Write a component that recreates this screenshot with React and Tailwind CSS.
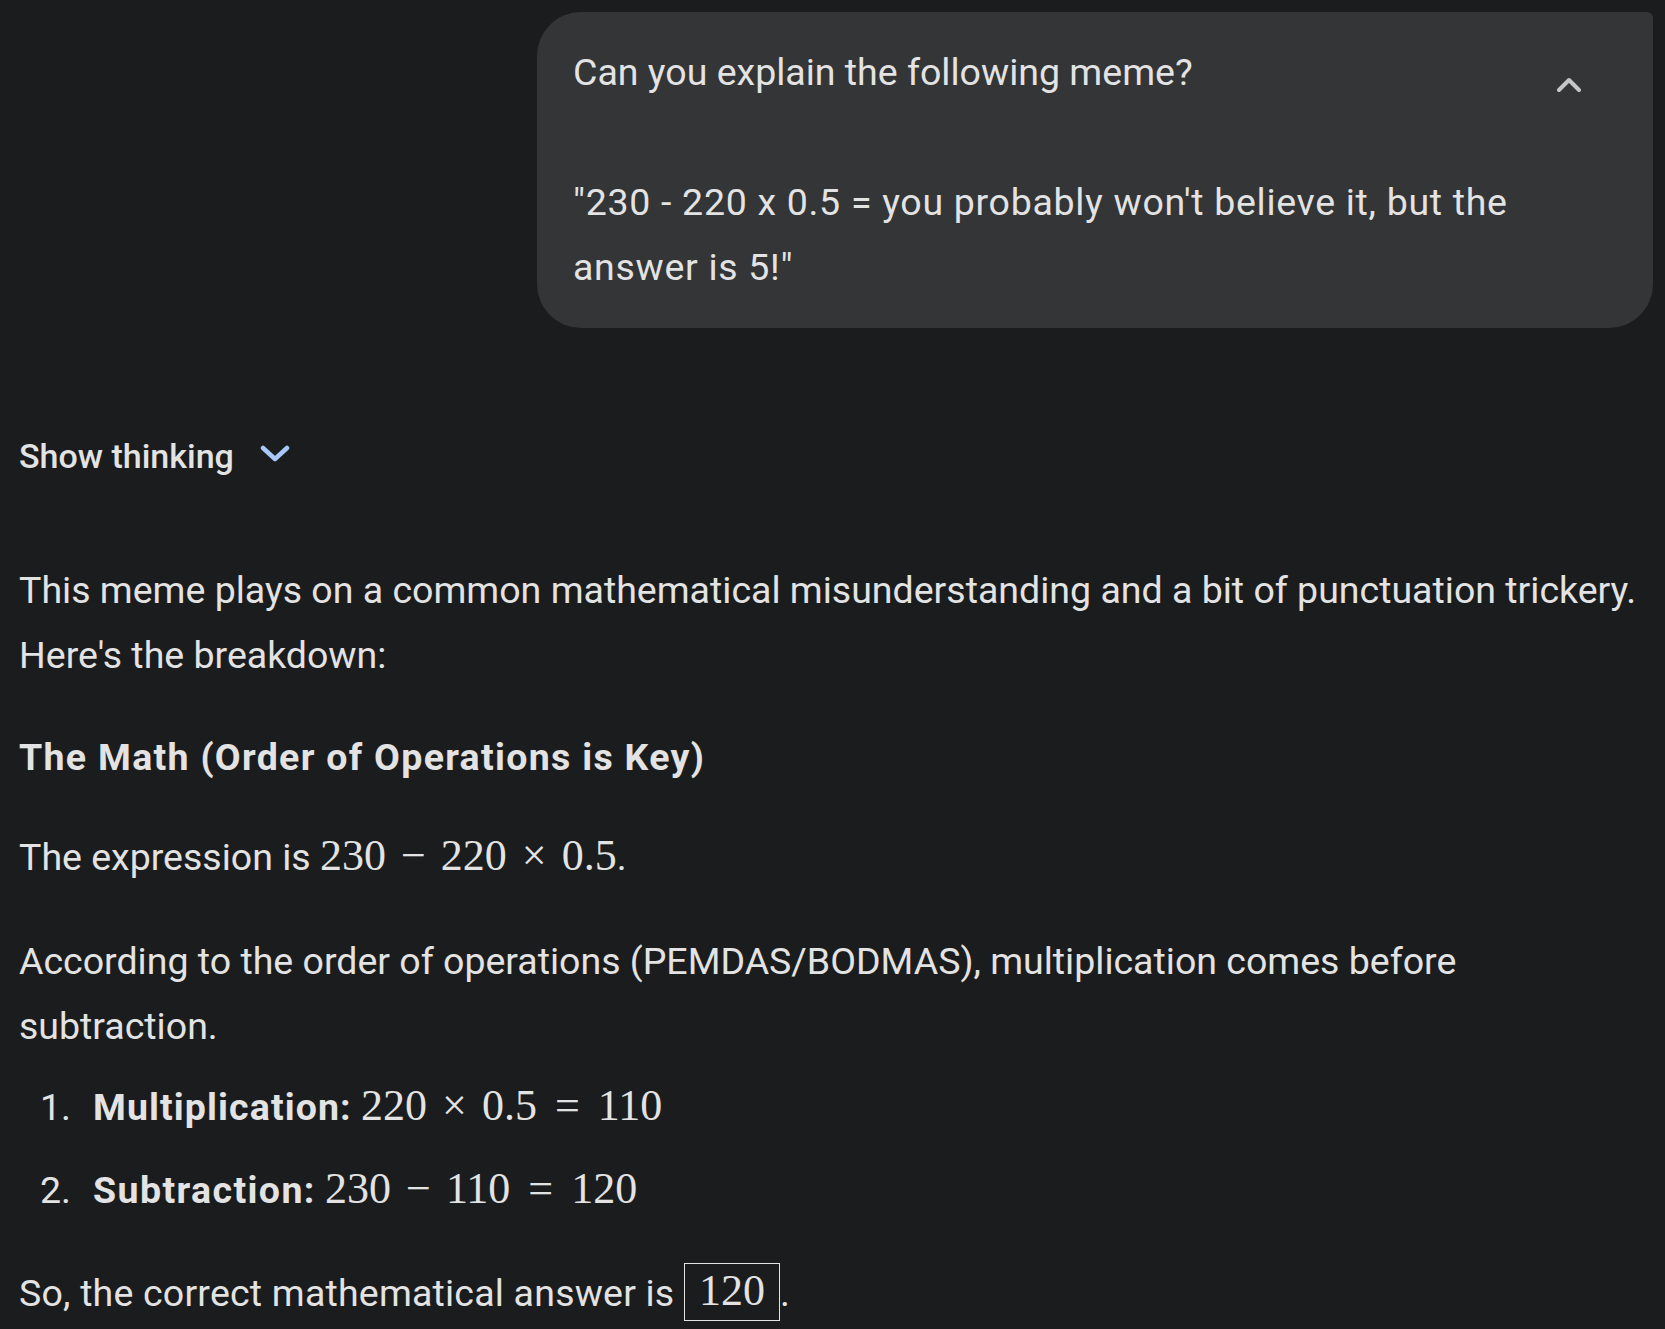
import React from 'react';

// KaTeX-ish inline math: serif digits, spaced operators
const M = ({ children }) => (
    <span className="font-['Liberation_Serif',serif] text-[44px] leading-none whitespace-nowrap">{children}</span>
);
const Op = ({ children }) => <span className="mx-[15px]">{children}</span>;
const Rel = ({ children }) => <span className="mx-[18px]">{children}</span>;

export default function App() {
    return (
        <div className="min-h-screen bg-[#1b1c1d] text-[#e3e3e3] font-['Roboto',sans-serif] text-[37.5px] leading-[65px]">
            {/* user prompt */}
            <div className="flex justify-end pt-[12px] pr-[12px]">
                <div className="flex w-[1116px] rounded-[44px] rounded-tr-[6px] bg-[#333537] py-[28px] pl-[36px] pr-[72px]">
                    <div className="flex-1">
                        <p>Can you explain the following meme?</p>
                        <p>&nbsp;</p>
                        <p className="tracking-[0.7px]">"230 - 220 x 0.5 = you probably won't believe it, but the answer is 5!"</p>
                    </div>
                    <svg width="24" height="16" viewBox="0 0 24 16" className="mt-[37px] shrink-0">
                        <polyline points="2,13 12,3 22,13" fill="none" stroke="#c4c7c5" strokeWidth="4" strokeLinecap="round" strokeLinejoin="round" />
                    </svg>
                </div>
            </div>

            {/* response */}
            <div className="px-[19px]">
                <button className="mt-[104px] flex items-center gap-[26px] h-[48px] text-[34px] font-medium text-[#e3e3e3]">
                    <span>Show thinking</span>
                    <svg width="30" height="18" viewBox="0 0 30 18" className="-mt-[4px]">
                        <polyline points="3,3 15,14 27,3" fill="none" stroke="#a8c7fa" strokeWidth="4.5" strokeLinecap="round" strokeLinejoin="round" />
                    </svg>
                </button>

                <div className="mt-[78px]">
                    <p>This meme plays on a common mathematical misunderstanding and a bit of punctuation trickery. Here's the breakdown:</p>
                    <h3 className="mt-[37px] font-bold tracking-[1.3px]">The Math (Order of Operations is Key)</h3>
                    <p className="mt-[35px]">
                        The expression is <M>230<Op>−</Op>220<Op>×</Op>0.5</M>.
                    </p>
                    <p className="mt-[39px]">According to the order of operations (PEMDAS/BODMAS), multiplication comes before subtraction.</p>
                    <ol className="mt-[16px]">
                        <li className="flex">
                            <span className="w-[74px] shrink-0 pl-[21px]">1.</span>
                            <span>
                                <b className="tracking-[1.1px]">Multiplication:</b> <M>220<Op>×</Op>0.5<Rel>=</Rel>110</M>
                            </span>
                        </li>
                        <li className="mt-[18px] flex">
                            <span className="w-[74px] shrink-0 pl-[21px]">2.</span>
                            <span>
                                <b className="tracking-[1.4px]">Subtraction:</b> <M>230<Op>−</Op>110<Rel>=</Rel>120</M>
                            </span>
                        </li>
                    </ol>
                    <p className="mt-[38px] tracking-[0.2px]">
                        So, the correct mathematical answer is{' '}
                        <span className="inline-block border border-[#e3e3e3] px-[14px] leading-[56px] align-middle -mt-[9px] tracking-normal">
                            <M>120</M>
                        </span>
                        .
                    </p>
                </div>
            </div>
        </div>
    );
}
